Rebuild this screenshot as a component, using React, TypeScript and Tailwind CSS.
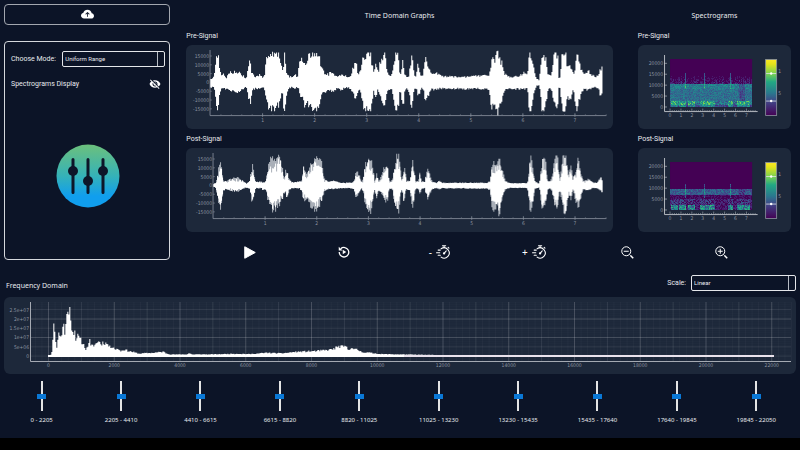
import React from "react";
import { MdVisibilityOff } from "react-icons/md";
import { BsFillCloudArrowUpFill } from "react-icons/bs";

type Key = [number, number, number];

/* Small deterministic generator, so that every render draws the same trace. */
function seeded(seed: number) {
  let s = seed;
  return () => {
    s = (s * 1664525 + 1013904223) % 4294967296;
    return s / 4294967296;
  };
}

/* Envelope keys: position, amplitude above and below zero, in thirds of a unit. */
const PRE: Key[] = [
  [92,12,14],[100,12,14],[104,35,20],[108,75,60],[112,88,78],[116,85,72],[119,40,45],[124,20,18],[130,25,18],[140,15,20],
  [150,30,25],[160,32,28],[170,35,32],[180,32,27],[188,22,20],[198,14,13],[202,25,20],[206,55,50],[211,62,64],[215,35,40],
  [219,22,20],[228,18,18],[240,24,20],[250,15,14],[255,30,28],[259,75,55],[265,88,72],[272,92,78],[285,92,86],[295,87,70],
  [303,60,50],[307,30,25],[310,50,70],[315,88,84],[320,35,45],[325,20,20],[337,16,14],[345,25,18],[352,16,15],[358,50,25],
  [362,80,45],[368,60,50],[375,55,70],[385,75,65],[395,87,80],[403,92,86],[415,92,80],[420,65,55],[427,40,30],[435,25,30],
  [445,25,22],[455,32,27],[470,20,20],[485,25,22],[500,18,15],[512,20,18],[518,40,30],[524,58,50],[530,52,42],[535,22,20],
  [542,45,30],[550,80,70],[560,87,87],[572,84,80],[577,50,50],[582,25,25],[588,55,50],[594,30,20],[600,60,40],[606,65,50],
  [612,85,75],[617,80,60],[622,30,25],[630,22,20],[636,25,20],[642,65,60],[648,88,86],[655,84,78],[658,35,35],[663,25,35],
  [667,70,60],[670,60,75],[674,25,25],[680,18,18],[686,22,30],[691,50,55],[695,85,75],[699,50,45],[703,18,18],[709,20,20],
  [714,64,45],[719,30,30],[724,18,18],[730,25,20],[733,60,50],[737,82,62],[742,50,45],[748,40,35],[754,25,22],[765,30,20],
  [775,28,20],[785,18,18],[810,18,18],[840,17,19],[870,18,21],[900,21,18],[920,22,22],[928,25,25],[933,60,70],[940,85,78],
  [944,60,80],[948,92,94],[953,96,100],[958,85,80],[963,60,55],[968,55,45],[974,25,22],[985,18,18],[1010,18,20],[1032,30,20],
  [1042,20,18],[1046,85,80],[1052,88,88],[1057,60,70],[1062,35,30],[1068,14,12],[1076,8,8],[1080,30,25],[1084,80,82],[1090,88,88],
  [1097,75,65],[1103,25,25],[1110,20,18],[1116,40,30],[1120,80,65],[1126,88,78],[1133,80,65],[1136,15,15],[1140,15,15],[1144,85,75],
  [1150,88,88],[1158,88,86],[1161,45,40],[1167,65,55],[1174,45,40],[1179,25,22],[1185,45,60],[1190,88,82],[1196,70,60],[1203,38,35],
  [1210,25,22],[1223,38,22],[1235,22,18],[1245,18,15],[1255,20,18],[1259,40,35],[1264,42,40],[1267,52,40],
];

const POST: Key[] = [
  [101,4,4],[108,8,8],[113,35,35],[118,60,55],[122,85,70],[126,60,50],[130,15,15],[140,12,10],[150,20,14],[165,23,18],
  [180,22,16],[190,12,9],[200,6,6],[209,12,10],[214,45,40],[219,60,50],[223,30,30],[228,10,8],[245,12,8],[250,8,14],
  [258,12,12],[263,50,40],[270,75,60],[280,88,80],[290,80,65],[296,98,60],[303,75,52],[308,50,40],[312,20,20],[317,45,25],
  [322,50,40],[327,20,15],[335,10,8],[350,10,8],[358,12,8],[365,15,15],[370,58,45],[380,40,42],[390,55,60],[400,80,70],
  [407,84,87],[418,82,60],[427,62,45],[433,20,15],[445,12,10],[460,14,10],[480,8,8],[500,8,8],[515,8,8],[522,12,10],
  [527,35,30],[532,48,35],[538,30,22],[545,12,10],[550,20,20],[555,60,50],[562,78,75],[570,82,87],[578,65,50],[584,15,12],
  [590,35,35],[596,15,14],[602,25,20],[608,48,30],[614,50,48],[622,70,48],[627,15,10],[637,15,10],[643,50,50],[650,95,82],
  [657,95,75],[662,40,20],[666,12,12],[669,35,30],[672,60,58],[676,40,20],[680,12,10],[690,14,14],[694,45,45],[698,70,65],
  [703,35,30],[708,10,8],[715,12,10],[719,44,30],[724,12,10],[734,10,8],[738,30,25],[743,48,38],[750,30,25],[756,12,10],
  [770,8,8],[778,14,10],[785,8,8],[840,8,8],[900,8,9],[922,8,8],[930,15,15],[935,60,60],[942,68,80],[948,60,60],
  [952,70,60],[957,96,100],[962,60,60],[968,40,30],[976,12,10],[990,7,7],[1040,7,7],[1044,15,15],[1048,60,60],[1052,85,85],
  [1058,55,50],[1064,12,10],[1078,5,5],[1082,40,40],[1088,87,82],[1097,65,50],[1102,18,15],[1110,12,8],[1116,30,20],[1122,65,55],
  [1128,92,68],[1134,70,50],[1138,20,15],[1142,40,30],[1147,85,55],[1155,96,96],[1160,65,60],[1165,35,25],[1172,62,48],[1178,20,15],
  [1186,40,45],[1194,80,64],[1202,40,35],[1210,12,12],[1225,22,14],[1235,10,8],[1250,7,7],[1258,20,12],[1263,28,18],[1267,10,25],
];

/* Spectrum keys: position and height, in thirds of a unit. */
const SPECTRUM: [number, number][] = [
  [145,2],[152,4],[156,25],[159,90],[163,88],[166,40],[169,30],[173,65],[178,68],[183,60],[187,90],[190,95],[193,68],
  [197,110],[202,142],[205,148],[208,140],[211,100],[215,92],[219,68],[222,88],[225,55],[232,60],[240,50],[247,38],[253,30],
  [257,18],[263,35],[267,52],[271,30],[280,33],[290,40],[295,50],[300,36],[308,42],[320,38],[328,28],[337,30],[345,20],
  [355,22],[360,15],[372,20],[385,15],[400,12],[415,7],[440,9],[460,10],[490,13],[497,8],[510,5],[560,5],[566,9],[575,5],
  [640,5],[700,7],[750,6],[800,10],[840,8],[890,13],[940,15],[980,18],[1000,22],[1015,30],[1025,28],[1035,30],[1045,18],
  [1053,30],[1060,20],[1070,20],[1085,12],[1110,10],[1140,6],[1200,5],[1250,4],[1365,2],[2322,2],
];

function valueAt(keys: number[][], x: number, col: number) {
  let i = 1;
  while (i < keys.length - 1 && keys[i][0] < x) i++;
  const a = keys[i - 1];
  const b = keys[i];
  const t = Math.min(1, Math.max(0, (x - a[0]) / (b[0] - a[0])));
  return a[col] + (b[col] - a[col]) * t;
}

/* A stepped outline, one bar per column, with seeded roughness. */
function envelope(keys: Key[], x0: number, mid: number, seed: number, inner: boolean) {
  const rnd = seeded(seed);
  const top: string[] = [];
  const low: string[] = [];
  const end = keys[keys.length - 1][0];
  for (let x = keys[0][0]; x <= end; x += 3) {
    const left = (x - keys[0][0]) / 3 + x0;
    const up = valueAt(keys, x, 1);
    const down = valueAt(keys, x, 2);
    const rough = () => 0.8 + rnd() * 0.34;
    const shrinkUp = inner && up > 14 ? 0.58 + rnd() * 0.34 : 1;
    const shrinkDown = inner && down > 14 ? 0.62 + rnd() * 0.34 : 1;
    const u = (Math.min(up * rough(), Math.max(up, 90)) * shrinkUp) / 3;
    const d = (Math.min(down * rough(), Math.max(down, 86)) * shrinkDown) / 3;
    const a = left.toFixed(2);
    const b = (left + 1).toFixed(2);
    top.push(`${a} ${(mid - u).toFixed(2)}`, `${b} ${(mid - u).toFixed(2)}`);
    low.unshift(`${b} ${(mid + d).toFixed(2)}`, `${a} ${(mid + d).toFixed(2)}`);
  }
  return `M${top.concat(low).join("L")}Z`;
}

function spectrumPath() {
  const rnd = seeded(11);
  const top: string[] = [];
  for (let x = 145; x <= 1400; x += 3) {
    const h = (valueAt(SPECTRUM, x, 1) * (0.8 + rnd() * 0.34)) / 3;
    const y = (59 - Math.min(h, 50)).toFixed(2);
    top.push(`${(x / 3 - 4).toFixed(2)} ${y}`, `${(x / 3 - 3).toFixed(2)} ${y}`);
  }
  return `M44 59.5L${top.join("L")}L463 59.5Z`;
}

const VIRIDIS = [
  "#440154", "#481a6c", "#472f7d", "#414487", "#39568c", "#31688e", "#2a788e",
  "#23888e", "#1f988b", "#22a884", "#35b779", "#54c568", "#7ad151", "#a5db36", "#d2e21b",
];

const BURSTS = [[1, 7], [9, 15], [18, 24], [30, 44], [58, 62], [67, 79]];

function spectrogramPaths(post: boolean) {
  const rnd = seeded(post ? 77 : 31);
  const out: string[] = VIRIDIS.map(() => "");
  for (let c = 0; c < 82; c++) {
    const spike = c === 15 || c === 34 || c === 60;
    const burst = BURSTS.some((b) => c >= b[0] && c <= b[1]);
    const quiet = c >= 69 && c <= 74;
    const colGain = rnd();
    for (let r = 0; r < 48; r++) {
      const n = rnd();
      let v = 0;
      if (post) {
        if (r >= 27 && r < 33) v = (quiet ? 1 : 3) + n * 3.5 + (spike ? 4 : 0);
        else if (r >= 22 && r < 36 && spike) v = 2 + n * 5;
        else if (r >= 33 && r < 37) v = n * 1.6;
        else if (r >= 37 && r < 43) v = burst ? n * 5 : n * 3;
        else if (r >= 43) v = burst ? 3 + n * 8 : n * 3;
      } else {
        if (r < 14) v = 0;
        else if (r < 25) v = n * ((r - 13) / 3.6) * (0.5 + colGain) + (spike ? 4 : 0);
        else if (r < 30) v = (quiet ? 2.5 : 5) + n * 3.5 + (spike ? 3 : 0);
        else if (r < 42) v = (quiet ? 2 : 4) + n * 3 + colGain;
        else if (r < 46) v = burst ? 6 + n * 7 : 3 + n * 6;
        else v = burst ? 5 + n * 5 : 2 + n * 3;
      }
      const i = Math.max(0, Math.min(VIRIDIS.length - 1, Math.floor(v)));
      if (i > 0) out[i] += `M${c} ${r}h1v1h-1z`;
    }
  }
  return out;
}

const axisText = "fill-[#8d95a1] font-['DejaVu_Sans_Condensed','Noto_Sans',sans-serif] text-[5px]";

function TimeChart({ keys, x0, tick0, step, seed, label, soft }: {
  keys: Key[]; x0: number; tick0: number; step: number; seed: number; label: string; soft?: boolean;
}) {
  const ys = ["15000", "10000", "5000", "0", "-5000", "-10000", "-15000"];
  return (
    <svg viewBox="0 0 426 84" role="img" aria-label={label} className="block h-auto w-full rounded-md bg-[#1d283a]">
      {ys.map((t, i) => (
        <g key={t}>
          <text x={x0 - 1} y={13 + i * 8.8} textAnchor="end" className={axisText}>{t}</text>
          <path d={`M${x0} ${11 + i * 8.8}h2`} stroke="#8d95a1" strokeWidth="0.5" />
        </g>
      ))}
      <path d={envelope(keys, x0, 37.5, seed, false)} fill={soft ? "#a9afb8" : "#fff"} />
      {soft && <path d={envelope(keys, x0, 37.5, seed, true)} fill="#fff" />}
      <path d={`M${x0} 5V70.5H420`} fill="none" stroke="#8d95a1" strokeWidth="0.8" />
      {Array.from({ length: 38 }, (_, i) => (
        <path key={i} d={`M${tick0 - step + (i + 1) * (step / 5)} 70v-1`} stroke="#8d95a1" strokeWidth="0.4" />
      ))}
      {[1, 2, 3, 4, 5, 6, 7].map((n, i) => (
        <g key={n}>
          <path d={`M${tick0 + i * step} 72v-4`} stroke="#8d95a1" strokeWidth="0.6" />
          <text x={tick0 + i * step} y="77" textAnchor="middle" className={axisText}>{n}</text>
        </g>
      ))}
    </svg>
  );
}

function Spectrogram({ post, label }: { post: boolean; label: string }) {
  const id = post ? "bar-post" : "bar-pre";
  return (
    <svg viewBox="0 0 153 84" role="img" aria-label={label} className="block h-auto w-full rounded-md bg-[#1d283a]">
      <defs>
        <linearGradient id={id} x1="0" x2="0" y1="0" y2="1">
          <stop offset="0" stopColor="#fde725" />
          <stop offset="0.08" stopColor="#e5e41a" />
          <stop offset="0.25" stopColor="#7ad151" />
          <stop offset="0.4" stopColor="#22a884" />
          <stop offset="0.6" stopColor="#2a788e" />
          <stop offset="0.75" stopColor="#414487" />
          <stop offset="1" stopColor="#440154" />
        </linearGradient>
      </defs>
      <g transform="translate(32 14)">
        <rect width="82" height="48" fill="#440154" />
        {spectrogramPaths(post).map((d, i) => d && <path key={i} d={d} fill={VIRIDIS[i]} shapeRendering="crispEdges" />)}
      </g>
      <path d="M26.5 10V66.5H119.5" fill="none" stroke="#c3c7cd" strokeWidth="0.9" />
      {["20000", "15000", "10000", "5000", "0"].map((t, i) => (
        <g key={t}>
          <text x="25" y={20 + i * 10.9} textAnchor="end" className={axisText}>{t}</text>
          <path d={`M26 ${18.3 + i * 10.9}h3`} stroke="#c3c7cd" strokeWidth="0.6" />
        </g>
      ))}
      {Array.from({ length: 40 }, (_, i) => (
        <path key={i} d={`M${32 + i * 2.18} 66v-${i % 5 ? 1 : 2.5}`} stroke="#c3c7cd" strokeWidth="0.5" />
      ))}
      {[0, 1, 2, 3, 4, 5, 6, 7].map((n) => (
        <text key={n} x={32 + n * 10.9} y="72" textAnchor="middle" className={axisText}>{n}</text>
      ))}
      <rect x="127.5" y="14.5" width="11" height="56" fill={`url(#${id})`} stroke="#8d95a1" strokeWidth="0.8" />
      <path d="M128 28.5h10M128 56h10" stroke="#dfe5e5" strokeWidth="0.8" />
      <circle cx="133" cy="28.5" r="1.2" fill="#fff" />
      <circle cx="133" cy="56" r="1.2" fill="#fff" />
      <text x="140" y="28" className={axisText}>1</text>
      <text x="140" y="50" className={axisText}>5</text>
    </svg>
  );
}

function FrequencyChart() {
  const x = (n: number) => 44.5 + n * 65.75;
  return (
    <svg viewBox="0 0 792 77" role="img" aria-label="Frequency domain" className="block h-auto w-full rounded-md bg-[#1d283a]">
      <g stroke="#fff">
        {Array.from({ length: 116 }, (_, i) => (
          <path key={i} d={`M${x(-0.2 + i * 0.1)} 5V64`} strokeWidth="0.8" strokeOpacity="0.045" />
        ))}
        {Array.from({ length: 23 }, (_, i) => (
          <path key={i} d={`M${x(i / 2)} 5V64`} strokeWidth="0.8" strokeOpacity={i % 2 ? 0.09 : 0.2} />
        ))}
        {Array.from({ length: 30 }, (_, i) => (
          <path key={i} d={`M27 ${59.5 - i * 1.86}H787`} strokeWidth="0.5" strokeOpacity="0.03" />
        ))}
        {[12.5, 22, 31.2, 40.5, 49.8, 59].map((y, i) => (
          <path key={y} d={`M27 ${y}H787`} strokeWidth="0.8" strokeOpacity={i === 1 || i === 3 ? 0.22 : 0.1} />
        ))}
      </g>
      {["2.5e+07", "2e+07", "1.5e+07", "1e+07", "5e+06", "0"].map((t, i) => (
        <text key={t} x="25" y={14.5 + i * 9.3} textAnchor="end" className={axisText}>{t}</text>
      ))}
      <path d={spectrumPath()} fill="#fff" />
      <path d="M44 59H400" stroke="#fff" strokeWidth="2" />
      <path d="M400 59H770" stroke="#e9e2ec" strokeWidth="1.8" />
      <path d="M26.5 5V64.5H787" fill="none" stroke="#b4b9c1" strokeWidth="0.9" />
      {Array.from({ length: 12 }, (_, i) => (
        <text key={i} x={x(i)} y="70" textAnchor="middle" className={axisText}>{i * 2000}</text>
      ))}
    </svg>
  );
}

function Logo() {
  return (
    <svg viewBox="0 0 64 64" role="img" aria-label="Equalizer" className="h-16 w-16">
      <defs>
        <linearGradient id="logo" x1="0" x2="0" y1="0" y2="1">
          <stop offset="0" stopColor="#6cc07c" />
          <stop offset="0.5" stopColor="#35b2b8" />
          <stop offset="0.82" stopColor="#109eee" />
          <stop offset="1" stopColor="#109eee" />
        </linearGradient>
      </defs>
      <circle cx="32" cy="32" r="31.5" fill="url(#logo)" />
      <path d="M17 15.5v33M32 15.5v33M47 15.5v33" stroke="#0d1528" strokeWidth="3" strokeLinecap="round" />
      <circle cx="17" cy="27" r="5" fill="#0d1528" />
      <circle cx="32" cy="37" r="5" fill="#0d1528" />
      <circle cx="47" cy="27" r="5" fill="#0d1528" />
    </svg>
  );
}

function Stopwatch() {
  return (
    <svg viewBox="0 0 26 26" className="h-[14px] w-[14px]" fill="none" stroke="currentColor" strokeWidth="2" strokeLinecap="round">
      <path d="M9.5 7A9.5 9.5 0 1 1 9.500 22.500" />
      <path d="M12 1.5h6M15 2v3M22.5 4.5l1.5 1.5M15.5 15l3.500-4" />
      <path d="M4 9.500h4M1 14.500h6M4 19h4" />
      <circle cx="15" cy="15.5" r="1.200" fill="currentColor" />
    </svg>
  );
}

function Magnifier({ plus }: { plus?: boolean }) {
  return (
    <svg viewBox="0 0 26 26" className="h-[13px] w-[13px]" fill="none" stroke="currentColor" strokeWidth="2">
      <circle cx="10.5" cy="10.5" r="9" />
      <path d={plus ? "M5.5 10.5h10M10.5 5.500v10" : "M5.500 10.500h10"} />
      <path d="M17 17l2 2" />
      <path d="M19 19l5.500 5.500" strokeWidth="3" />
    </svg>
  );
}

const BANDS = [
  "0 - 2205", "2205 - 4410", "4410 - 6615", "6615 - 8820", "8820 - 11025",
  "11025 - 13230", "13230 - 15435", "15435 - 17640", "17640 - 19845", "19845 - 22050",
];

const labelFont = "font-['Roboto','Liberation_Sans',sans-serif]";

const selectStyle =
  "h-4 appearance-none rounded-[2px] border border-[#e4e6ea] bg-[linear-gradient(#b8bdc6,#b8bdc6)] bg-[length:1px_100%] bg-[position:right_6px_top] bg-no-repeat pl-[2px] text-[6px]";

export default function App() {
  return (
    <div className="min-h-screen bg-black font-['Noto_Sans','Open_Sans',sans-serif] text-[7px] leading-[10px] text-[#e8eaee]">
      <main className="bg-[#0c1427] px-1 pb-[13px] pt-1">
        <div className="flex">
          <aside className="flex w-[21%] flex-col gap-4">
            <button type="button" aria-label="Upload file" className="flex h-[21px] items-center justify-center rounded border border-[#a3a7af] text-white">
              <BsFillCloudArrowUpFill className="h-[13px] w-[13px]" />
            </button>
            <section className="flex flex-1 flex-col rounded border border-[#d5d8dd] pb-[51px] pl-[6px] pr-1 pt-[9px]">
              <div className={`flex items-center justify-between ${labelFont}`}>
                <label htmlFor="mode">Choose Mode:</label>
                <select id="mode" className={`${selectStyle} w-[103px]`} defaultValue="Uniform Range">
                  <option>Uniform Range</option>
                </select>
              </div>
              <div className={`mt-[11px] flex items-center justify-between pr-1 ${labelFont}`}>
                <span>Spectrograms Display</span>
                <button type="button" aria-label="Hide spectrograms" className="text-white">
                  <MdVisibilityOff className="h-3 w-3" />
                </button>
              </div>
              <div className="flex flex-1 items-end justify-center">
                <Logo />
              </div>
            </section>
          </aside>

          <div className="ml-4 flex-1 pr-[5px]">
            <div className="flex gap-[25px]">
              <section className="flex-[426] pt-[7px]">
                <h2 className="text-center">Time Domain Graphs</h2>
                <h3 className={`mb-1 mt-[10px] ${labelFont}`}>Pre-Signal</h3>
                <TimeChart keys={PRE} x0={24} tick0={76.5} step={52} seed={5} label="Pre-signal waveform" />
                <h3 className={`my-1 pt-px ${labelFont}`}>Post-Signal</h3>
                <TimeChart keys={POST} x0={27} tick0={79} step={51.6} seed={9} label="Post-signal waveform" soft />
              </section>
              <section className="flex-[153] pt-[7px]">
                <h2 className="text-center">Spectrograms</h2>
                <h3 className={`mb-1 mt-[10px] ${labelFont}`}>Pre-Signal</h3>
                <Spectrogram post={false} label="Pre-signal spectrogram" />
                <h3 className={`my-1 pt-px ${labelFont}`}>Post-Signal</h3>
                <Spectrogram post label="Post-signal spectrogram" />
              </section>
            </div>
            <div className="mt-3 grid grid-cols-6 items-center justify-items-center pl-4 pr-[22px] text-white">
              <button type="button" aria-label="Play" className="h-4">
                <svg viewBox="0 0 24 26" className="h-[13px] w-3" fill="currentColor" stroke="currentColor" strokeWidth="2" strokeLinejoin="round">
                  <path d="M1.5 1.5L22.5 13L1.5 24.5Z" />
                </svg>
              </button>
              <button type="button" aria-label="Replay" className="h-4">
                <svg viewBox="0 0 24 24" className="h-3 w-3" fill="none" stroke="currentColor" strokeWidth="2.6">
                  <path d="M5.5 5.5A9.5 9.5 0 1 1 2.5 12" />
                  <path d="M1.5 1.5V9h7.5z" fill="currentColor" stroke="none" />
                  <path d="M9.5 7.5l7 4.5-7 4.5z" fill="currentColor" stroke="none" />
                </svg>
              </button>
              <button type="button" aria-label="Slower" className="flex h-4 items-center gap-1 pl-[2px] text-[10px]">
                <span>-</span>
                <Stopwatch />
              </button>
              <button type="button" aria-label="Faster" className="flex h-4 items-center gap-1 pl-[2px] text-[10px]">
                <span>+</span>
                <Stopwatch />
              </button>
              <button type="button" aria-label="Zoom out" className="h-4"><Magnifier /></button>
              <button type="button" aria-label="Zoom in" className="h-4"><Magnifier plus /></button>
            </div>
          </div>
        </div>

        <section>
          <div className="mb-[6px] mt-[15px] flex items-center pl-[2px]">
            <h2 className="mr-auto pt-[5px]">Frequency Domain</h2>
            <label htmlFor="scale" className={`mr-[5px] ${labelFont}`}>Scale:</label>
            <select id="scale" className={`${selectStyle} ${labelFont} w-[105px]`} defaultValue="Linear">
              <option>Linear</option>
            </select>
          </div>
          <FrequencyChart />
          <div className="-ml-[2px] mt-[7px] grid grid-cols-10">
            {BANDS.map((band, i) => (
              <div key={band} className="flex flex-col items-center gap-1">
                <input
                  id={`band-${i}`}
                  type="range"
                  min={0}
                  max={10}
                  defaultValue={5}
                  className="h-[30px] w-[9px] appearance-none bg-[linear-gradient(#e4e4e4,#e4e4e4)] bg-[length:2px_100%] bg-center bg-no-repeat [writing-mode:vertical-lr] [&::-webkit-slider-thumb]:h-[5px] [&::-webkit-slider-thumb]:w-[9px] [&::-webkit-slider-thumb]:appearance-none [&::-webkit-slider-thumb]:bg-[#0a78d6]"
                />
                <label htmlFor={`band-${i}`} className="text-[6px] whitespace-nowrap">{band}</label>
              </div>
            ))}
          </div>
        </section>
      </main>
    </div>
  );
}
